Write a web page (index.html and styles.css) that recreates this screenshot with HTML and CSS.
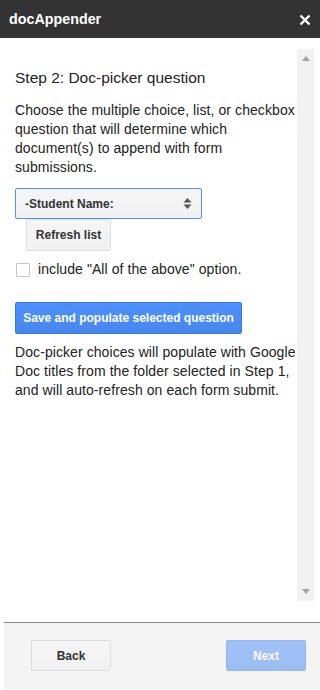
FILE: index.html
```html
<!DOCTYPE html>
<html lang="en">
<head>
  <meta charset="UTF-8" />
  <title>docAppender</title>
  <link rel="stylesheet" href="styles.css">
</head>
<body>
  <div class="header">
    <div class="title">docAppender</div>
    <svg class="close" width="12" height="12" viewBox="0 0 12 12">
      <path d="M1.5 1.5L10.5 10.5M10.5 1.5L1.5 10.5" stroke="#fff" stroke-width="2.4" fill="none"/>
    </svg>
  </div>

  <div class="main">
    <div class="content">
      <div class="step">Step 2: Doc-picker question</div>
      <p class="text">Choose the multiple choice, list, or checkbox question that will determine which document(s) to append with form submissions.</p>

      <div class="select">
        <span>-Student Name:</span>
        <svg width="9" height="13" viewBox="0 0 9 13">
          <path d="M4.5 1L8.5 5.5H0.5Z" fill="#555"/>
          <path d="M4.5 12L8.5 7.5H0.5Z" fill="#555"/>
        </svg>
      </div>
      <button class="btn refresh">Refresh list</button>

      <label class="check-row">
        <span class="checkbox"></span>
        <span>include "All of the above" option.</span>
      </label>

      <button class="btn action save">Save and populate selected question</button>

      <p class="text note">Doc-picker choices will populate with Google Doc titles from the folder selected in Step 1, and will auto-refresh on each form submit.</p>
    </div>

    <div class="scrollbar">
      <svg width="8" height="5" viewBox="0 0 8 5"><path d="M4 0L8 5H0Z" fill="#a3a3a3"/></svg>
      <svg width="8" height="5" viewBox="0 0 8 5"><path d="M0 0H8L4 5Z" fill="#a3a3a3"/></svg>
    </div>
  </div>

  <div class="footer">
    <button class="btn nav">Back</button>
    <button class="btn action nav disabled">Next</button>
  </div>
</body>
</html>
```

FILE: styles.css
```css
* {
  box-sizing: border-box;
}

body {
  margin: 0;
  width: 320px;
  height: 690px;
  font-family: 'Liberation Sans', Arial, sans-serif;
  color: #222;
  background: #fff;
}

.header {
  height: 38px;
  background: #333;
  display: flex;
  align-items: center;
  justify-content: space-between;
  padding: 0 9px 0 9px;
}

.title {
  color: #fff;
  font-weight: 700;
  font-size: 14.3px;
}

.close {
  margin-top: 1px;
}

.main {
  display: flex;
  height: 584px;
  padding: 11px 6px 21px 15px;
}

.content {
  flex: 1;
  min-width: 0;
}

.step {
  margin-top: 19px;
  font-size: 15.5px;
  line-height: 20px;
}

.text {
  margin: 13px -2px 0 0;
  font-size: 14px;
  letter-spacing: 0.08px;
  line-height: 19px;
}

.select {
  margin-top: 11px;
  width: 187px;
  height: 31px;
  border: 1px solid #4d90fe;
  border-radius: 2px;
  background: linear-gradient(#f5f5f5, #f1f1f1);
  display: flex;
  align-items: center;
  justify-content: space-between;
  padding: 0 9px 0 9px;
  font-size: 12px;
  font-weight: 700;
  color: #333;
}

.btn {
  display: block;
  font-family: inherit;
  font-size: 12px;
  font-weight: 700;
  color: #333;
  height: 32px;
  border: 1px solid #dcdcdc;
  border-radius: 2px;
  background: linear-gradient(#f5f5f5, #f1f1f1);
  padding: 0;
  white-space: nowrap;
}

.refresh {
  margin-left: 11px;
  width: 85px;
}

.check-row {
  display: flex;
  align-items: center;
  margin-top: 9px;
  font-size: 14px;
  letter-spacing: 0.08px;
  line-height: 19px;
}

.checkbox {
  width: 14px;
  height: 14px;
  border: 1px solid #c6c6c6;
  border-radius: 1px;
  background: #fff;
  margin: 0 8px 0 1px;
}

.action {
  color: #fff;
  border-color: #3079ed;
  background: linear-gradient(#4d90fe, #4787ed);
}

.save {
  margin-top: 23px;
  width: 227px;
}

.note {
  margin-top: 9px;
}

.scrollbar {
  width: 17px;
  background: #f1f1f1;
  display: flex;
  flex-direction: column;
  justify-content: space-between;
  align-items: center;
  padding: 7px 0 7px;
}

.footer {
  margin-left: 4px;
  height: 67px;
  border-top: 1px solid #8a8a8a;
  background: #f4f4f4;
  display: flex;
  justify-content: space-between;
  align-items: flex-start;
  padding: 17px 14px 0 27px;
}

.nav {
  width: 80px;
  height: 31px;
}

.disabled {
  opacity: 0.5;
}
```
